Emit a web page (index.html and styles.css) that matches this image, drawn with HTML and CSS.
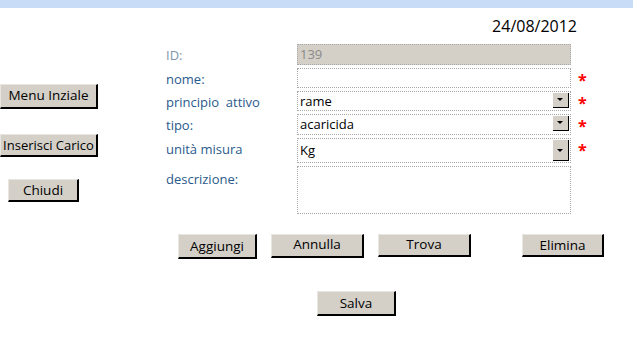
FILE: index.html
```html
<!DOCTYPE html>
<html lang="it">
<head>
  <meta charset="UTF-8">
  <title>Prodotti</title>
  <link rel="stylesheet" href="styles.css">
</head>
<body>

<div class="topbar"></div>
<div class="date">24/08/2012</div>

<div class="page">
  <div class="side">
    <div class="btn btn-menu">Menu Inziale</div>
    <div class="btn btn-carico">Inserisci Carico</div>
    <div class="btn btn-chiudi">Chiudi</div>
  </div>

  <div class="main">
    <div class="form">
      <div class="label label-id">ID:</div>
      <div class="field field-id">139</div>
      <div class="star"></div>

      <div class="label">nome:</div>
      <div class="field"></div>
      <div class="star">*</div>

      <div class="label">principio&nbsp; attivo</div>
      <div class="field combo">rame<span class="drop"></span></div>
      <div class="star">*</div>

      <div class="label">tipo:</div>
      <div class="field combo">acaricida<span class="drop"></span></div>
      <div class="star">*</div>

      <div class="label">unità misura</div>
      <div class="field combo field-um">Kg<span class="drop"></span></div>
      <div class="star">*</div>

      <div class="label label-desc">descrizione:</div>
      <div class="field field-desc"></div>
      <div class="star"></div>
    </div>

    <div class="actions">
      <div class="btn btn-aggiungi">Aggiungi</div>
      <div class="btn btn-annulla">Annulla</div>
      <div class="btn btn-trova">Trova</div>
      <div class="btn btn-elimina">Elimina</div>
    </div>

    <div class="save-row">
      <div class="btn btn-salva">Salva</div>
    </div>
  </div>
</div>

</body>
</html>
```

FILE: styles.css
```css
body {
  margin: 0;
  padding: 0;
  background: white;
  font-family: "Open Sans", "Noto Sans", sans-serif;
  font-size: 12.5px;
  color: #000;
}

.topbar {
  height: 8px;
  background-color: #c9dcf7;
}

.date {
  text-align: right;
  padding-right: 56px;
  margin-top: 9px;
  font-size: 16px;
  line-height: 19px;
}

.page {
  display: flex;
}

/* colonna pulsanti a sinistra */
.side {
  width: 166px;
  display: flex;
  flex-direction: column;
  align-items: flex-start;
}

.btn {
  background-color: #d4d0c8;
  border-right: 2px solid #000;
  border-bottom: 2px solid #000;
  border-top: 1px solid #e8e6e0;
  border-left: 1px solid #e8e6e0;
  box-sizing: border-box;
  text-align: center;
  font-size: 13.5px;
  line-height: 20px;
  color: #000;
}

.btn-menu {
  width: 98px;
  height: 25px;
  margin-top: 48px;
}
.btn-carico {
  width: 98px;
  height: 23px;
  margin-top: 25px;
  font-size: 13px;
}
.btn-chiudi {
  width: 71px;
  height: 23px;
  margin-top: 22px;
  margin-left: 8px;
}

/* modulo */
.form {
  display: grid;
  grid-template-columns: 131px 274px 20px;
  grid-template-rows: 21px 20px 20px 21px 25px 48px;
  row-gap: 3px;
  margin-top: 8px;
}

.label {
  color: #2a5a8c;
  font-size: 13px;
  line-height: 20px;
  padding-top: 1px;
}
.label-id {
  color: #8294a8;
}
.label-desc {
  padding-top: 3px;
}

.field {
  border: 1px dotted #a8a8a8;
  background: white;
  box-sizing: border-box;
  position: relative;
  padding-left: 2px;
  font-size: 13px;
  line-height: 18px;
}
.field-id {
  background-color: #d4d0c8;
  color: #8a8a8a;
}
.field-um {
  line-height: 22px;
}

.drop {
  position: absolute;
  right: 1px;
  top: 1px;
  width: 16px;
  height: 15px;
  background-color: #d4d0c8;
  border-right: 1px solid #000;
  border-bottom: 1px solid #000;
  box-sizing: border-box;
}
.field-um .drop {
  height: 21px;
  top: 1px;
}
.drop::after {
  content: "";
  position: absolute;
  left: 4px;
  top: 5px;
  border-left: 3px solid transparent;
  border-right: 3px solid transparent;
  border-top: 3px solid #000;
}
.field-um .drop::after {
  top: 9px;
}

.star {
  color: #ff0000;
  font-size: 16px;
  font-weight: bold;
  line-height: 18px;
  padding-left: 7px;
  padding-top: 3px;
}

/* pulsanti in basso */
.actions {
  display: flex;
  margin-top: 20px;
  margin-left: 12px;
}
.btn-aggiungi {
  width: 79px;
  height: 25px;
  line-height: 22px;
}
.btn-annulla {
  width: 93px;
  height: 24px;
  margin-left: 14px;
  line-height: 18px;
}
.btn-trova {
  width: 93px;
  height: 23px;
  margin-left: 14px;
  line-height: 18px;
}
.btn-elimina {
  width: 82px;
  height: 23px;
  margin-left: 51px;
}

.save-row {
  margin-top: 32px;
  margin-left: 151px;
}
.btn-salva {
  width: 79px;
  height: 25px;
  line-height: 22px;
}
```
